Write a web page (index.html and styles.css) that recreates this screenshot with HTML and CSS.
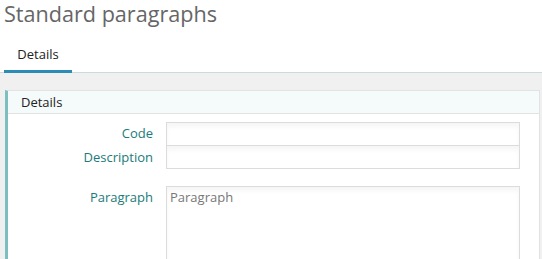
FILE: index.html
```html
<!DOCTYPE html>
<html lang="en">
<head>
    <meta charset="UTF-8">
    <meta name="viewport" content="width=device-width, initial-scale=1.0">
    <title>Standard paragraphs</title>
    <link rel="stylesheet" href="styles.css">
</head>
<body>
    <h1 class="page-title">Standard paragraphs</h1>

    <div class="tabs">
        <div class="tab active">Details</div>
    </div>

    <div class="content">
        <div class="panel">
            <div class="panel-header">Details</div>
            <div class="panel-body">
                <div class="field-group">
                    <div class="field">
                        <label for="code">Code</label>
                        <input type="text" id="code">
                    </div>
                    <div class="field">
                        <label for="description">Description</label>
                        <input type="text" id="description">
                    </div>
                </div>
                <div class="field-group">
                    <div class="field">
                        <label for="paragraph">Paragraph</label>
                        <textarea id="paragraph" placeholder="Paragraph"></textarea>
                    </div>
                </div>
            </div>
        </div>
    </div>
</body>
</html>
```

FILE: styles.css
```css
body {
    margin: 0;
    font-family: "Open Sans", sans-serif;
    font-size: 13px;
    color: #222;
    background: #fff;
}
.page-title {
    margin: 0;
    padding: 0 0 0 4px;
    height: 40px;
    font-size: 21.6px;
    font-weight: normal;
    line-height: 28px;
    color: #666;
}
.tabs {
    display: flex;
    padding-left: 4px;
    height: 32px;
    border-bottom: 1px solid #c9dcdc;
}
.tab {
    width: 68px;
    text-align: center;
    line-height: 28px;
    color: #222;
}
.tab.active {
    border-bottom: 3px solid #2b8db4;
    margin-bottom: -1px;
}
.content {
    background: #f0f0f0;
    padding: 17px 2px 0 5px;
    height: 169px;
}
.panel {
    background: #fff;
    border-left: 3px solid #7dbfbf;
    border-right: 1px solid #e2e2e2;
    border-top: 1px solid #e2e2e2;
    height: 100%;
    box-sizing: border-box;
    overflow: hidden;
}
.panel-header {
    margin-left: -3px;
    border-left: 3px solid #4b9b9b;
    background: #f5fafb;
    border-bottom: 1px solid #e2e2e2;
    height: 22px;
    line-height: 22px;
    padding-left: 13px;
}
.panel-body {
    padding: 8px 19px 0 0;
}
.field-group {
    margin-bottom: 17px;
}
.field-group:last-child {
    margin-bottom: 0;
}
.field {
    display: grid;
    grid-template-columns: 145px 1fr;
    column-gap: 13px;
}
.field label {
    text-align: right;
    color: #1b7b7b;
    padding-top: 2px;
}
.field input,
.field textarea {
    box-sizing: border-box;
    width: 100%;
    margin: 0;
    border: 1px solid #dcdcdc;
    background: #fff;
    box-shadow: inset 0 4px 5px rgba(0, 0, 0, 0.04);
    font-family: inherit;
    font-size: 13px;
    color: #555;
}
.field input {
    height: 24px;
}
.field + .field input {
    margin-top: -1px;
}
.field textarea {
    display: block;
    height: 90px;
    resize: none;
    padding: 1px 3px;
}
.field textarea::placeholder {
    color: #777;
}
```
